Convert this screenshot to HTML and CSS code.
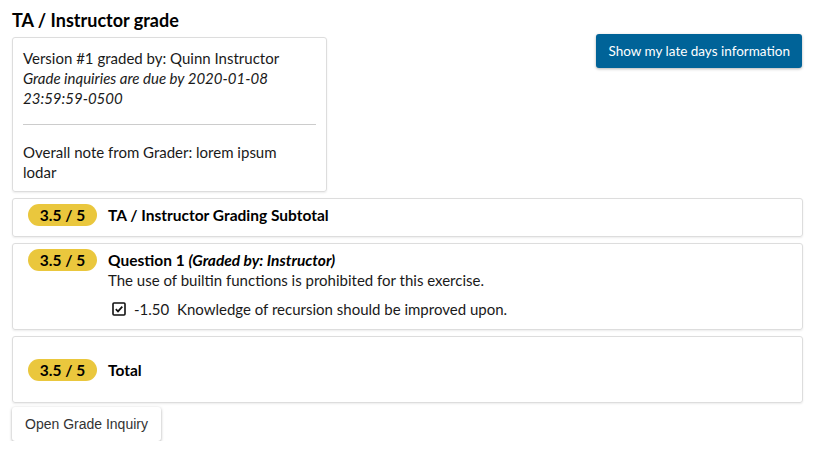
FILE: index.html
```html
<!DOCTYPE html>
<html>
<head>
<meta charset="utf-8">
<link rel="stylesheet" href="styles.css">
</head>
<body>
<div class="page">
  <h2 class="title">TA / Instructor grade</h2>
  <div class="top">
    <div class="info-box">
      <div>Version #1 graded by: Quinn Instructor</div>
      <div class="due">Grade inquiries are due by 2020-01-08 23:59:59-0500</div>
      <hr class="sep">
      <div class="note">Overall note from Grader: lorem ipsum lodar</div>
    </div>
    <button class="btn-primary">Show my late days information</button>
  </div>

  <div class="row row-sub">
    <span class="badge">3.5 / 5</span>
    <div class="row-body"><span class="bold">TA / Instructor Grading Subtotal</span></div>
  </div>

  <div class="row row-q">
    <span class="badge">3.5 / 5</span>
    <div class="row-body">
      <div><span class="bold">Question 1</span> <span class="bold ital">(Graded by: Instructor)</span></div>
      <div>The use of builtin functions is prohibited for this exercise.</div>
      <div class="mark">
        <svg class="check" width="14" height="14" viewBox="0 0 14 14"><rect x="1" y="1" width="12" height="12" rx="1" fill="none" stroke="#111" stroke-width="1.6"/><path d="M3.8 7.2 L6 9.4 L10.3 4.6" fill="none" stroke="#111" stroke-width="1.7"/></svg>
        <span class="pts">-1.50</span>
        <span>Knowledge of recursion should be improved upon.</span>
      </div>
    </div>
  </div>

  <div class="row row-total">
    <span class="badge">3.5 / 5</span>
    <div class="row-body"><span class="bold">Total</span></div>
  </div>

  <button class="btn-default">Open Grade Inquiry</button>
</div>
</body>
</html>
```
FILE: styles.css
```css
html, body {
  margin: 0;
  padding: 0;
  background: #fff;
}
body {
  font-family: "Lato", "Noto Sans", sans-serif;
  font-size: 15px;
  line-height: 20px;
  color: #1a1a1a;
}
.page {
  padding: 9px 13px 0 12px;
}
.title {
  margin: 0 0 6px 0;
  font-size: 18px;
  line-height: 22px;
  font-weight: 700;
  color: #000;
}
.top {
  display: flex;
  justify-content: space-between;
  align-items: flex-start;
}
.info-box {
  width: 293px;
  border: 1px solid #ddd;
  border-radius: 3px;
  box-shadow: 0 1px 2px rgba(0,0,0,0.08);
  padding: 10px 10px 9px 10px;
}
.due {
  font-style: italic;
}
.note {
  max-width: 268px;
}
.sep {
  border: 0;
  border-top: 1px solid #ccc;
  margin: 16px 0 17px 0;
}
.btn-primary {
  margin-top: -3px;
  margin-right: 1px;
  background: #006398;
  color: #fff;
  border: 0;
  border-radius: 3px;
  height: 34px;
  padding: 0 12px;
  font-family: inherit;
  font-size: 13.5px;
  box-shadow: 0 1px 3px rgba(0,0,0,0.3);
}
.row {
  margin-top: 6px;
  border: 1px solid #ddd;
  border-radius: 3px;
  box-shadow: 0 1px 2px rgba(0,0,0,0.08);
  display: flex;
  align-items: flex-start;
  padding: 5px 15px;
}
.row-sub {
  height: 27px;
}
.row-q {
  padding-bottom: 10px;
}
.row-total {
  align-items: center;
  height: 55px;
}
.badge {
  flex: none;
  width: 69px;
  height: 22px;
  line-height: 22px;
  border-radius: 11px;
  background: #eac73d;
  color: #000;
  font-weight: 700;
  font-size: 15.5px;
  text-align: center;
}
.row-body {
  margin-left: 11px;
  padding-top: 1px;
}
.bold {
  font-weight: 700;
  font-size: 15.5px;
  color: #000;
}
.ital {
  font-style: italic;
}
.mark {
  display: flex;
  align-items: center;
  margin-top: 9px;
  padding-left: 4px;
}
.check {
  margin-right: 8px;
}
.pts {
  width: 43px;
}
.btn-default {
  margin-top: 4px;
  background: #fff;
  color: #333;
  border: 0;
  border-radius: 3px;
  height: 34px;
  padding: 0 13px;
  font-family: "Liberation Sans", Arial, sans-serif;
  font-size: 14px;
  box-shadow: 0 1px 3px rgba(0,0,0,0.35);
}
```
